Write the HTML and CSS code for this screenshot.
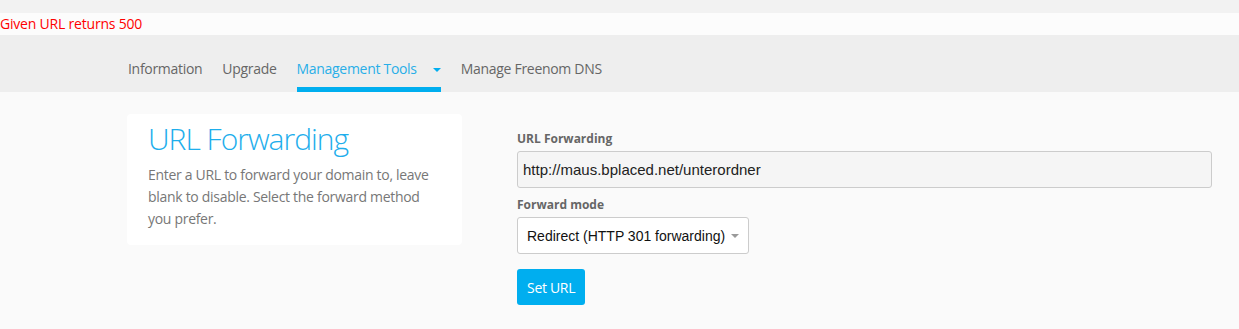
FILE: index.html
```html
<!DOCTYPE html>
<html>
<head>
<meta charset="utf-8">
<link rel="stylesheet" href="styles.css">
</head>
<body>
<div class="topbar"></div>
<div class="alert">Given URL returns 500</div>
<nav class="tabs">
  <a class="tab">Information</a>
  <a class="tab">Upgrade</a>
  <a class="tab active">Management Tools<span class="caret"></span></a>
  <a class="tab">Manage Freenom DNS</a>
</nav>
<main class="content">
  <section class="card">
    <h1 class="card-title">URL Forwarding</h1>
    <p class="card-text">Enter a URL to forward your domain to, leave blank to disable. Select the forward method you prefer.</p>
  </section>
  <form class="form">
    <label class="label">URL Forwarding</label>
    <input class="input" type="text" value="http://maus.bplaced.net/unterordner">
    <label class="label label-mode">Forward mode</label>
    <div class="select-wrap">
      <select class="select">
        <option>Redirect (HTTP 301 forwarding)</option>
      </select>
    </div>
    <button class="button" type="button">Set URL</button>
  </form>
</main>
</body>
</html>
```
FILE: styles.css
```css
* { box-sizing: border-box; }
html, body { margin: 0; padding: 0; }
body {
  font-family: "Open Sans", "Liberation Sans", sans-serif;
  background: #fafafa;
  height: 329px;
  overflow: hidden;
}
.topbar { height: 13px; background: #f2f2f2; }
.alert {
  height: 22px;
  line-height: 22px;
  background: #fcfcfc;
  color: #ff0000;
  font-size: 14px;
  letter-spacing: -0.2px;
}
.tabs {
  display: flex;
  gap: 20px;
  height: 57px;
  background: #eeeeee;
  padding-left: 128px;
}
.tab {
  display: flex;
  align-items: center;
  padding: 24px 0 8px;
  height: 57px;
  line-height: 20px;
  font-size: 14px;
  letter-spacing: -0.3px;
  color: #666;
  border-bottom: 5px solid transparent;
}
.tab.active {
  color: #29aee8;
  border-bottom-color: #00aeef;
}
.caret {
  display: inline-block;
  width: 0;
  height: 0;
  margin-left: 16px;
  margin-top: 1px;
  border-left: 4px solid transparent;
  border-right: 4px solid transparent;
  border-top: 4px solid #00aeef;
}
.content {
  display: flex;
  gap: 55px;
  padding: 22px 0 0 127px;
  background: #fafafa;
}
.card {
  width: 335px;
  background: #ffffff;
  border-radius: 4px;
  padding: 8px 21px 15px;
  align-self: flex-start;
}
.card-title {
  margin: 0;
  font-size: 30px;
  line-height: 33px;
  font-weight: 300;
  letter-spacing: -1px;
  color: #1eaeec;
}
.card-text {
  margin: 9px 0 0;
  font-size: 14px;
  line-height: 22px;
  letter-spacing: -0.3px;
  color: #777;
}
.form {
  width: 695px;
  padding-top: 16px;
  display: flex;
  flex-direction: column;
  align-items: flex-start;
}
.label {
  display: block;
  font-size: 12px;
  line-height: 17px;
  font-weight: 700;
  color: #666;
  margin-bottom: 4px;
}
.label-mode { margin-top: 8px; }
.input {
  width: 695px;
  height: 37px;
  border: 1px solid #cccccc;
  border-radius: 3px;
  background: #f5f5f5;
  padding: 0 5px;
  font-family: "Liberation Sans", Arial, sans-serif;
  font-size: 15px;
  color: #222;
  outline: none;
}
.select-wrap {
  position: relative;
  width: 232px;
}
.select-wrap::after {
  content: "";
  position: absolute;
  z-index: 1;
  pointer-events: none;
  left: 214px;
  top: 17px;
  width: 0;
  height: 0;
  border-left: 4px solid transparent;
  border-right: 4px solid transparent;
  border-top: 4px solid #9a9a9a;
}
.select {
  -webkit-appearance: none;
  appearance: none;
  width: 232px;
  height: 37px;
  border: 1px solid #cccccc;
  border-radius: 3px;
  background: #ffffff;
  padding: 0 0 0 9px;
  font-family: "Liberation Sans", Arial, sans-serif;
  font-size: 14px;
  color: #111;
  outline: none;
}
.button {
  margin-top: 15px;
  height: 36px;
  padding: 0 10px;
  border: none;
  border-radius: 3px;
  background: #00aeef;
  color: #ffffff;
  font-family: "Open Sans", "Liberation Sans", sans-serif;
  font-size: 14px;
  letter-spacing: -0.3px;
}
```
